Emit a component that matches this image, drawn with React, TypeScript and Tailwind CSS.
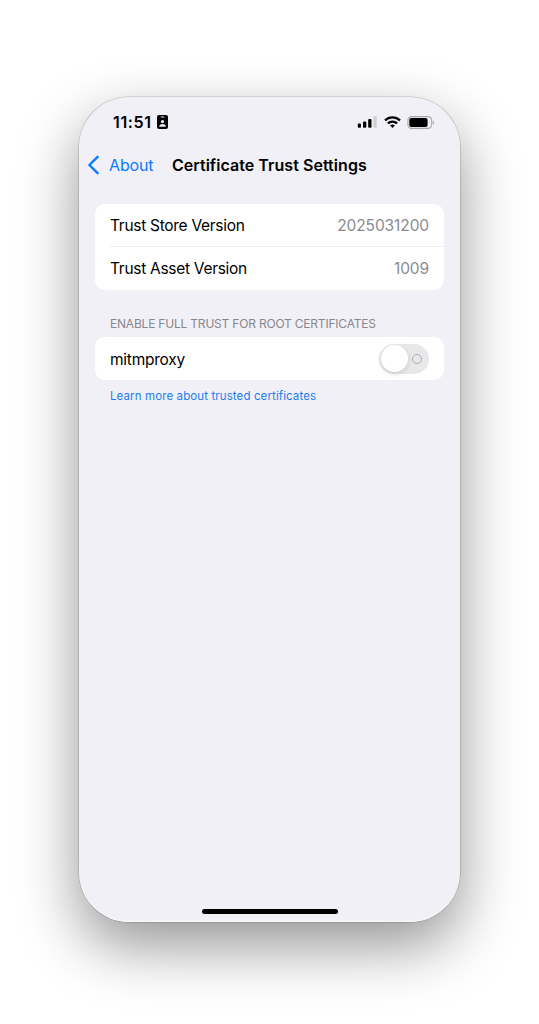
import React from "react";

function IdBadge() {
  return (
    <svg width="11" height="14" viewBox="0 0 11 14" className="ml-[5px] block">
      <rect width="11" height="14" rx="2" fill="#000" />
      <rect x="3.6" y="1.4" width="3.8" height="1.1" rx="0.5" fill="#f1f0f6" />
      <circle cx="5.5" cy="6.6" r="1.6" fill="#f1f0f6" />
      <path d="M2.2 11.8c0-1.9 1.4-2.8 3.3-2.8s3.3.9 3.3 2.8z" fill="#f1f0f6" />
    </svg>
  );
}

function Signal() {
  return (
    <svg width="20" height="12" viewBox="0 0 20 12" className="block">
      <rect x="0.8" y="7.6" width="3.2" height="4.2" rx="1" />
      <rect x="6" y="5.4" width="3.3" height="6.4" rx="1" />
      <rect x="11.2" y="3" width="3.3" height="8.8" rx="1" />
      <rect x="16.4" y="0.2" width="3.3" height="11.6" rx="1" fill="#cfced3" />
    </svg>
  );
}

function Wifi() {
  return (
    <svg width="17" height="12" viewBox="0 0 17 12" className="block" fill="none" stroke="#000" strokeWidth="2.2">
      <path d="M1 4.4a10.7 10.7 0 0 1 15 0" />
      <path d="M3.9 7.4a6.6 6.6 0 0 1 9.2 0" />
      <path d="M8.5 12 6.1 9.6a3.5 3.5 0 0 1 4.8 0z" fill="#000" stroke="none" />
    </svg>
  );
}

function Battery() {
  return (
    <svg width="27" height="13" viewBox="0 0 27 13" className="block">
      <rect x="0.9" y="0.6" width="23.8" height="11.8" rx="3.6" fill="none" stroke="#a6a5aa" strokeWidth="1.1" />
      <rect x="2.3" y="2" width="18.3" height="9" rx="1.9" />
      <path d="M25.9 4.5c1.5.6 1.5 3.4 0 4z" fill="#a6a5aa" />
    </svg>
  );
}

function Row({ label, value }: { label: string; value: string }) {
  return (
    <div className="flex h-[43px] items-center justify-between pr-[15px] pt-[2px] text-[15.5px]">
      <span className="tracking-[-0.29px]">{label}</span>
      <span className="tracking-[-0.1px] text-[#8b8b8f]">{value}</span>
    </div>
  );
}

export default function App() {
  return (
    <div className="h-[1024px] w-[539px] overflow-hidden bg-white pl-[79px] pt-[97px] font-['Inter','Liberation_Sans',sans-serif] text-black">
      <main className="flex h-[825px] w-[381px] flex-col rounded-[50px] bg-[#f1f0f6] shadow-[inset_0_-1px_1px_rgba(255,255,255,0.8),0_0_0_0.6px_rgba(0,0,0,0.22),0_24px_60px_rgba(0,0,0,0.42)]">
        <div className="mt-[12px] flex h-[26px] shrink-0 items-center justify-between pl-[34px] pr-[26px]">
          <div className="flex items-center">
            <span className="text-[16px] font-semibold leading-5 tracking-[0.65px]">11:51</span>
            <IdBadge />
          </div>
          <div className="flex items-center">
            <Signal />
            <div className="ml-[7px] mr-[6px]">
              <Wifi />
            </div>
            <Battery />
          </div>
        </div>
        <header className="mt-[16px] flex h-[26px] shrink-0 items-center pl-[9px] pt-px">
          <svg width="12" height="20" viewBox="0 0 12 20" fill="none" stroke="#0a7aff" strokeWidth="2.4" strokeLinecap="round" strokeLinejoin="round">
            <path d="M9.6 1.8 1.4 10l8.2 8.2" />
          </svg>
          <span className="ml-[9px] text-[16px] tracking-[-0.15px] text-[#0a7aff]">About</span>
          <h1 className="ml-[18.5px] text-[16px] font-semibold tracking-[0.05px]">Certificate Trust Settings</h1>
        </header>
        <section className="mx-4 mt-[26.5px] rounded-[10px] bg-white pl-[15px]">
          <Row label="Trust Store Version" value="2025031200" />
          <div className="-mt-px h-px bg-[#ededf0]" />
          <Row label="Trust Asset Version" value="1009" />
        </section>
        <h2 className="ml-[31px] mt-[26.5px] h-[16px] text-[12px] leading-4 tracking-[-0.2px] text-[#88878d]">ENABLE FULL TRUST FOR ROOT CERTIFICATES</h2>
        <section className="mx-4 mt-[5px] flex h-[43px] items-center justify-between rounded-[10px] bg-white pl-[15px] pr-[15px]">
          <span className="pt-[2px] text-[15.5px] tracking-[-0.25px]">mitmproxy</span>
          <button aria-label="Trust mitmproxy" className="flex h-[30px] w-[50px] items-center rounded-full bg-[#e8e8eb] pl-[1.5px]">
            <i className="h-[27px] w-[27px] rounded-full bg-white shadow-[0_2px_5px_rgba(0,0,0,0.13)]" />
            <i className="ml-[4px] h-[10px] w-[10px] rounded-full border border-[#adadb0]" />
          </button>
        </section>
        <a className="ml-[31px] mt-[7.5px] text-[11.5px] leading-4 tracking-[0.11px] text-[#1b7cf5]">Learn more about trusted certificates</a>
        <div className="mb-[8px] mt-auto h-[5px] w-[136px] self-center rounded-full bg-black" />
      </main>
    </div>
  );
}
